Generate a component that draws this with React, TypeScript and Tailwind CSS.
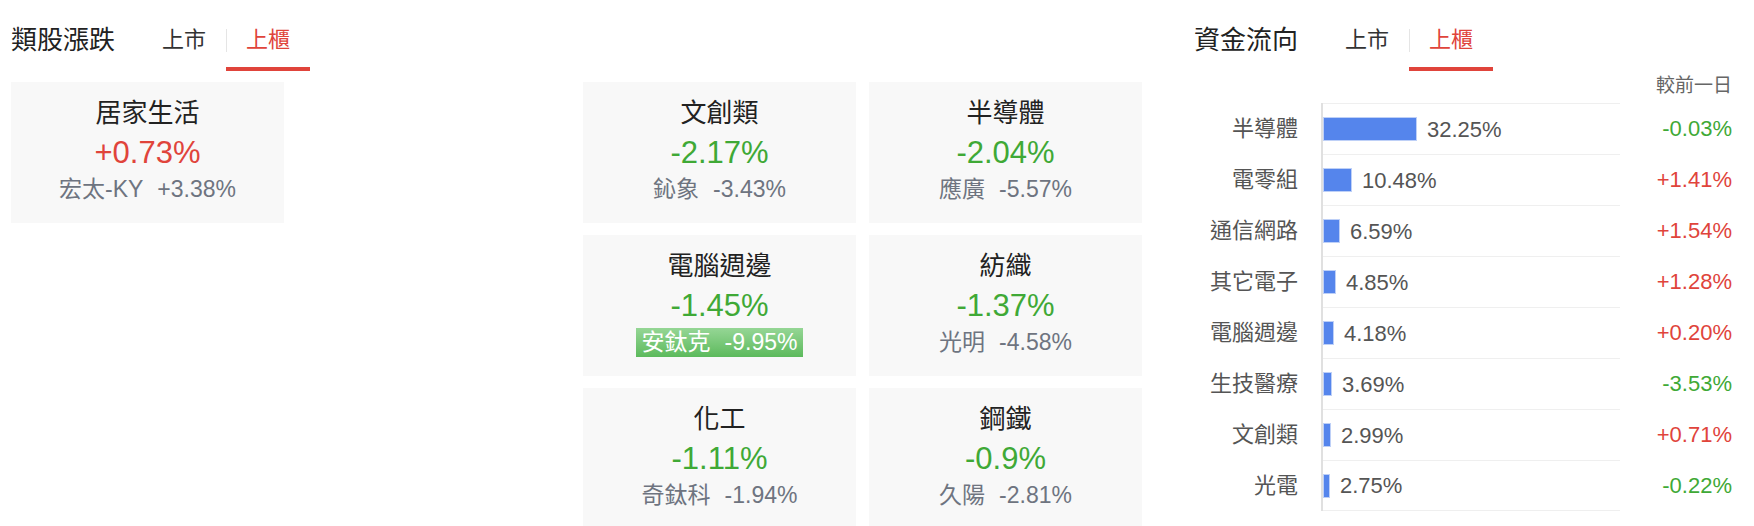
import React from 'react';

type Sector = {
  name: string;
  change: string;
  leader: string;
  leaderChange: string;
  highlight?: boolean;
};

type Flow = {
  name: string;
  share: string;
  barWidth: number;
  change: string;
};

const topSector: Sector = {
  name: '居家生活',
  change: '+0.73%',
  leader: '宏太-KY',
  leaderChange: '+3.38%',
};

const sectors: Sector[] = [
  { name: '文創類', change: '-2.17%', leader: '鈊象', leaderChange: '-3.43%' },
  { name: '半導體', change: '-2.04%', leader: '應廣', leaderChange: '-5.57%' },
  { name: '電腦週邊', change: '-1.45%', leader: '安鈦克', leaderChange: '-9.95%', highlight: true },
  { name: '紡織', change: '-1.37%', leader: '光明', leaderChange: '-4.58%' },
  { name: '化工', change: '-1.11%', leader: '奇鈦科', leaderChange: '-1.94%' },
  { name: '鋼鐵', change: '-0.9%', leader: '久陽', leaderChange: '-2.81%' },
];

// bar widths in px, scaled from each sector's share of turnover
const flows: Flow[] = [
  { name: '半導體', share: '32.25%', barWidth: 94, change: '-0.03%' },
  { name: '電零組', share: '10.48%', barWidth: 29, change: '+1.41%' },
  { name: '通信網路', share: '6.59%', barWidth: 17, change: '+1.54%' },
  { name: '其它電子', share: '4.85%', barWidth: 13, change: '+1.28%' },
  { name: '電腦週邊', share: '4.18%', barWidth: 11, change: '+0.20%' },
  { name: '生技醫療', share: '3.69%', barWidth: 9, change: '-3.53%' },
  { name: '文創類', share: '2.99%', barWidth: 8, change: '+0.71%' },
  { name: '光電', share: '2.75%', barWidth: 7, change: '-0.22%' },
];

const changeColor = (v: string) => (v.startsWith('+') ? 'text-[#e0443b]' : 'text-[#3fa936]');

function SectionHeader({ title }: { title: string }) {
  return (
    <div className="flex h-[71px] items-start">
      <h2 className="pt-[26px] text-[26px] leading-[28px] text-[#222]">{title}</h2>
      <div className="ml-[27px] flex items-start">
        <button className="px-[20px] pt-[26px] text-[22px] leading-[28px] text-[#333]">上市</button>
        <span className="mt-[29px] h-[23px] w-px bg-[#e5e5e5]" />
        <button className="-ml-px border-b-4 border-[#e0443b] px-[20px] pb-[13px] pt-[26px] text-[22px] leading-[28px] text-[#e0443b]">
          上櫃
        </button>
      </div>
    </div>
  );
}

function SectorCard({ sector }: { sector: Sector }) {
  return (
    <div className="flex h-[141px] w-[273px] flex-col items-center bg-[#f8f8f8] pt-[17px]">
      <div className="text-[26px] leading-[28px] text-[#222]">{sector.name}</div>
      <div className={`mt-[8px] text-[31px] leading-[36px] ${changeColor(sector.change)}`}>{sector.change}</div>
      {sector.highlight ? (
        <div className="mt-[4px] bg-gradient-to-b from-[#95d695] to-[#5cba5c] px-[6px] text-[23px] leading-[29px] text-white">
          {sector.leader}
          <span className="ml-[14px]">{sector.leaderChange}</span>
        </div>
      ) : (
        <div className="mt-[4px] text-[23px] leading-[29px] text-[#6e7480]">
          {sector.leader}
          <span className="ml-[14px]">{sector.leaderChange}</span>
        </div>
      )}
    </div>
  );
}

function FlowChart() {
  return (
    <div className="flex flex-col">
      {flows.map((f, i) => (
        <div key={f.name} className="flex h-[51px]">
          <div className="flex w-[104px] items-center justify-end text-[22px] text-[#555]">{f.name}</div>
          <div className="ml-[23px] w-[2px] bg-[#e0e0e0]" />
          <div
            className={`flex w-[297px] items-center border-t border-[#efefef] ${
              i === flows.length - 1 ? 'border-b' : ''
            }`}
          >
            <div className="h-[24px] border border-[#bed0f7] bg-[#5585ec]" style={{ width: f.barWidth }} />
            <span className="ml-[10px] text-[22px] text-[#555]">{f.share}</span>
          </div>
          <div className={`flex w-[112px] items-center justify-end text-[22px] ${changeColor(f.change)}`}>
            {f.change}
          </div>
        </div>
      ))}
    </div>
  );
}

export default function App() {
  return (
    <div className="flex h-[526px] w-[1754px] overflow-hidden bg-white font-['Liberation_Sans','Noto_Sans_CJK_TC',sans-serif]">
      <section className="w-[1142px] pl-[11px]">
        <SectionHeader title="類股漲跌" />
        <div className="mt-[11px] flex justify-between">
          <SectorCard sector={topSector} />
          <div className="grid grid-cols-2 gap-x-[13px] gap-y-[12px]">
            {sectors.map((s) => (
              <SectorCard key={s.name} sector={s} />
            ))}
          </div>
        </div>
      </section>

      <section className="ml-[52px] w-[538px]">
        <SectionHeader title="資金流向" />
        <div className="flex h-[32px] justify-end pt-[3px] text-[19px] leading-[24px] text-[#666]">較前一日</div>
        <FlowChart />
      </section>
    </div>
  );
}
